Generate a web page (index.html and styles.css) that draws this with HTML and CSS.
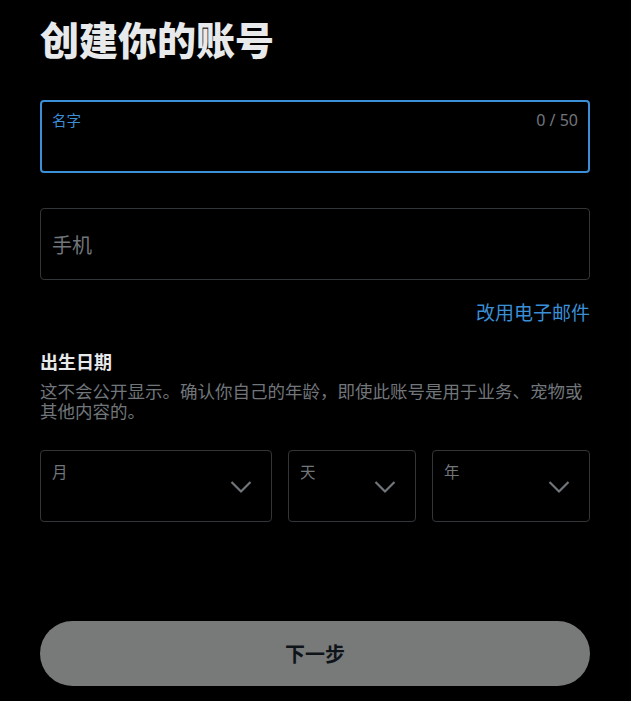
FILE: index.html
```html
<!DOCTYPE html>
<html lang="zh-CN">
<head>
<meta charset="utf-8">
<title>创建你的账号</title>
<link rel="stylesheet" href="styles.css">
</head>
<body>
<main class="page">
  <h1 class="title">创建你的账号</h1>

  <div class="field field-active">
    <div class="field-top">
      <span class="field-label">名字</span>
      <span class="counter">0 / 50</span>
    </div>
  </div>

  <div class="field field-phone">
    <span class="placeholder">手机</span>
  </div>

  <div class="switch-row"><a class="switch-link">改用电子邮件</a></div>

  <h2 class="dob-title">出生日期</h2>
  <p class="dob-desc">这不会公开显示。确认你自己的年龄，即使此账号是用于业务、宠物或其他内容的。</p>

  <div class="dob-grid">
    <div class="select">
      <span class="select-label">月</span>
      <svg class="chevron" viewBox="0 0 24 24" width="24" height="24"><path d="M2.5 8 12 17.5 21.5 8" fill="none" stroke="#71767b" stroke-width="2.2"/></svg>
    </div>
    <div class="select">
      <span class="select-label">天</span>
      <svg class="chevron" viewBox="0 0 24 24" width="24" height="24"><path d="M2.5 8 12 17.5 21.5 8" fill="none" stroke="#71767b" stroke-width="2.2"/></svg>
    </div>
    <div class="select">
      <span class="select-label">年</span>
      <svg class="chevron" viewBox="0 0 24 24" width="24" height="24"><path d="M2.5 8 12 17.5 21.5 8" fill="none" stroke="#71767b" stroke-width="2.2"/></svg>
    </div>
  </div>

  <button class="next-btn">下一步</button>
</main>
</body>
</html>
```

FILE: styles.css
```css
html, body {
  margin: 0;
  background: #000;
}
body {
  font-family: "Noto Sans CJK SC", "Noto Sans", sans-serif;
  color: #e7e9ea;
}
.page {
  width: 550px;
  padding: 0 41px 0 40px;
  display: flex;
  flex-direction: column;
}
.title {
  margin: 14px 0 0;
  font-size: 39px;
  line-height: 48px;
  font-weight: 900;
  color: #e7e9ea;
}
.field {
  box-sizing: border-box;
  border: 1px solid #333639;
  border-radius: 4px;
  height: 72px;
}
.field-active {
  margin-top: 38px;
  height: 73px;
  border: 2px solid #3a8fd6;
  padding: 8px 10px 0 10px;
}
.field-top {
  display: flex;
  justify-content: space-between;
  align-items: flex-start;
}
.field-label {
  font-size: 14.5px;
  line-height: 20px;
  color: #3a8fd6;
}
.counter {
  font-family: "Noto Sans", sans-serif;
  font-size: 16px;
  line-height: 20px;
  color: #71767b;
}
.field-phone {
  margin-top: 35px;
  display: flex;
  align-items: center;
  padding: 0 11px;
}
.placeholder {
  font-size: 20px;
  color: #71767b;
}
.switch-row {
  display: flex;
  justify-content: flex-end;
  margin-top: 19px;
}
.switch-link {
  font-size: 19px;
  line-height: 26px;
  color: #3a8fd6;
}
.dob-title {
  margin: 24px 0 0;
  font-size: 18px;
  line-height: 24px;
  font-weight: 700;
  color: #e7e9ea;
}
.dob-desc {
  margin: 8px 0 0;
  font-size: 17.5px;
  line-height: 19.5px;
  color: #71767b;
}
.dob-grid {
  margin-top: 30px;
  display: grid;
  grid-template-columns: 232fr 128fr 158fr;
  gap: 16px;
}
.select {
  box-sizing: border-box;
  height: 72px;
  border: 1px solid #333639;
  border-radius: 4px;
  position: relative;
  padding: 8px 11px;
}
.select-label {
  font-size: 15.5px;
  line-height: 20px;
  color: #71767b;
}
.chevron {
  position: absolute;
  right: 18px;
  top: 23px;
}
.next-btn {
  margin-top: 99px;
  height: 65px;
  border: none;
  border-radius: 33px;
  background: #787a79;
  color: #0f1419;
  font-family: "Noto Sans CJK SC", "Noto Sans", sans-serif;
  font-size: 20px;
  font-weight: 700;
  padding: 0;
}
```
